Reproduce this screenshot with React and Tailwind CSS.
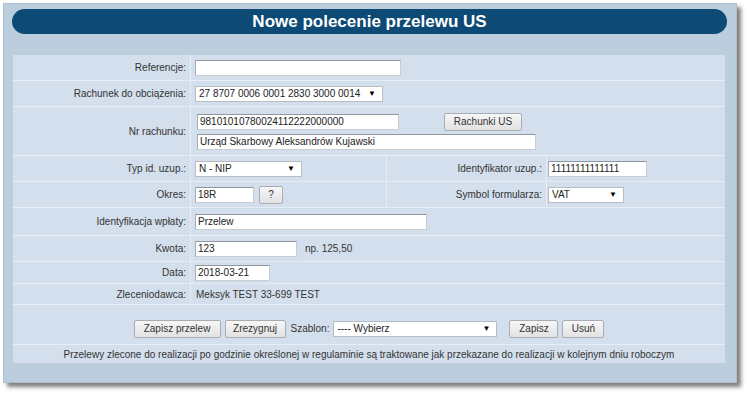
import React from 'react';

const line = 'border-[#e6edf5]';

function Input({ w, value = '', className = '' }) {
  return (
    <div
      className={`flex h-[16px] items-center border border-[#c9cdd2] border-t-[#8f969d] border-l-[#a7adb3] bg-white pl-[2px] text-[10px] leading-none text-[#222] ${className}`}
      style={{ width: w }}
    >
      {value}
    </div>
  );
}

function Select({ w, value }) {
  return (
    <div
      className="flex h-[16px] items-center justify-between border border-[#b7bcc2] bg-white pl-[3px] pr-[6px] text-[10px] leading-none text-[#222]"
      style={{ width: w }}
    >
      <span>{value}</span>
      <span className="text-[8px] text-black">▼</span>
    </div>
  );
}

function Btn({ w, children, className = '' }) {
  return (
    <div
      className={`flex h-[18px] items-center justify-center rounded-[2px] border border-[#a9adb2] bg-gradient-to-b from-[#f7f7f7] to-[#e2e2e2] text-[10px] leading-none text-[#333] ${className}`}
      style={{ width: w }}
    >
      {children}
    </div>
  );
}

function Label({ children, w = 'w-[178px]' }) {
  return (
    <div className={`flex ${w} shrink-0 items-center justify-end border-r ${line} pr-[4px] text-[10px] text-[#333]`}>
      {children}
    </div>
  );
}

function Row({ h, label, children }) {
  return (
    <div className={`flex border-b ${line}`} style={{ height: h }}>
      <Label>{label}</Label>
      <div className="flex flex-1 items-center pl-[4px] text-[10px] text-[#333]">{children}</div>
    </div>
  );
}

function SplitRow({ h, label, left, label2, right }) {
  return (
    <div className={`flex border-b ${line}`} style={{ height: h }}>
      <Label>{label}</Label>
      <div className={`flex w-[196px] shrink-0 items-center gap-[5px] border-r ${line} pl-[4px]`}>{left}</div>
      <Label w="w-[160px]">{label2}</Label>
      <div className="flex flex-1 items-center pl-[1px]">{right}</div>
    </div>
  );
}

export default function App() {
  return (
    <div className="h-[394px] w-[748px] bg-white pl-[3px] pt-[3px] font-['Liberation_Sans',Arial,sans-serif]">
      <div className="flex h-[380px] w-[734px] flex-col border border-[#aebfd0] bg-[#bccedd] shadow-[4px_4px_4px_rgba(0,0,0,0.5)]">
        <div className="ml-[8px] mr-[9px] mt-[5px] h-[25px] rounded-full bg-[#0d4a75] text-center text-[17px] font-bold leading-[25px] text-white">
          Nowe polecenie przelewu US
        </div>

        <div className="ml-[9px] mr-[11px] mt-[21px] bg-[#d3dfec]">
          <Row h={26} label="Referencje:">
            <Input w={206} />
          </Row>
          <Row h={26} label="Rachunek do obciążenia:">
            <Select w={188} value="27 8707 0006 0001 2830 3000 0014" />
          </Row>
          <div className={`flex border-b ${line}`} style={{ height: 49 }}>
            <Label>Nr rachunku:</Label>
            <div className="flex flex-1 flex-col justify-center gap-[3px] pl-[6px]">
              <div className="flex items-center">
                <Input w={202} value="98101010780024112222000000" />
                <Btn w={78} className="ml-[45px]">Rachunki US</Btn>
              </div>
              <Input w={339} value="Urząd Skarbowy Aleksandrów Kujawski" />
            </div>
          </div>
          <SplitRow
            h={26}
            label="Typ id. uzup.:"
            left={<Select w={107} value="N - NIP" />}
            label2="Identyfikator uzup.:"
            right={<Input w={99} value="11111111111111" />}
          />
          <SplitRow
            h={26}
            label="Okres:"
            left={
              <>
                <Input w={59} value="18R" />
                <Btn w={24} className="h-[17px]">?</Btn>
              </>
            }
            label2="Symbol formularza:"
            right={<Select w={76} value="VAT" />}
          />
          <Row h={28} label="Identyfikacja wpłaty:">
            <Input w={232} value="Przelew" />
          </Row>
          <Row h={26} label="Kwota:">
            <Input w={102} value="123" />
            <span className="ml-[8px]">np. 125,50</span>
          </Row>
          <Row h={22} label="Data:">
            <Input w={75} value="2018-03-21" />
          </Row>
          <Row h={21} label="Zleceniodawca:">
            <span className="pl-[1px]">Meksyk TEST 33-699 TEST</span>
          </Row>
          <div className={`flex h-[40px] items-center justify-center border-b ${line} pt-[8px] text-[10px] text-[#333]`}>
            <Btn w={87}>Zapisz przelew</Btn>
            <Btn w={61} className="ml-[4px]">Zrezygnuj</Btn>
            <span className="ml-[5px]">Szablon:</span>
            <div className="ml-[4px]">
              <Select w={164} value="---- Wybierz" />
            </div>
            <Btn w={49} className="ml-[12px]">Zapisz</Btn>
            <Btn w={42} className="ml-[4px]">Usuń</Btn>
          </div>
          <div className="flex h-[18px] items-center justify-center text-[10px] text-[#333]">
            Przelewy zlecone do realizacji po godzinie określonej w regulaminie są traktowane jak przekazane do realizacji w kolejnym dniu roboczym
          </div>
        </div>
      </div>
    </div>
  );
}
